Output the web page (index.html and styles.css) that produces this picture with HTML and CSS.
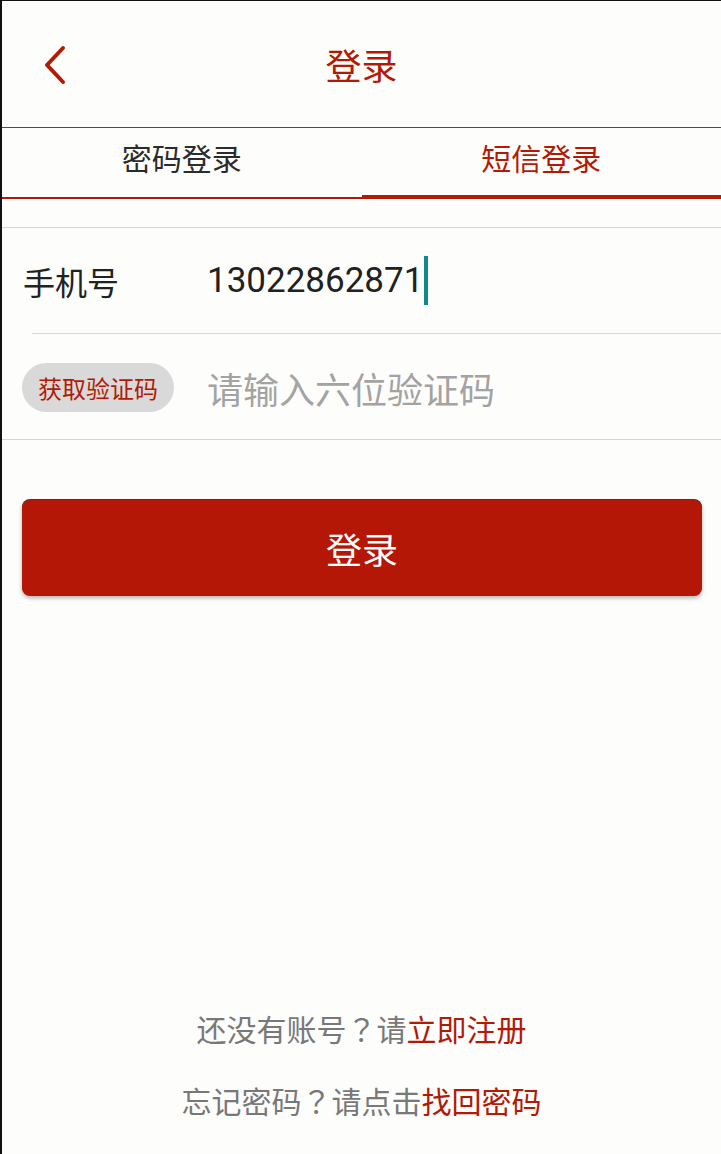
FILE: index.html
```html
<!DOCTYPE html>
<html lang="zh-CN">
<head>
<meta charset="utf-8">
<title>登录</title>
<link rel="stylesheet" href="styles.css">
</head>
<body>
  <div class="screen">
    <div class="topbar">
      <a class="back" href="#">
        <svg width="24" height="40" viewBox="0 0 24 40">
          <polyline points="19,3 3,20 19,37" fill="none" stroke="#b31a06" stroke-width="4" stroke-linecap="round" stroke-linejoin="round"/>
        </svg>
      </a>
      <div class="title">登录</div>
    </div>

    <div class="tabs">
      <div class="tab">密码登录</div>
      <div class="tab active">短信登录</div>
    </div>

    <div class="form">
      <div class="row">
        <div class="label">手机号</div>
        <div class="value">13022862871<span class="caret"></span></div>
      </div>
      <div class="row">
        <div class="label"><span class="getcode">获取验证码</span></div>
        <div class="value hint">请输入六位验证码</div>
      </div>
    </div>

    <a class="submit" href="#">登录</a>

    <div class="footer">
      <div class="line">还没有账号<span class="q" lang="ja">？</span>请<a href="#">立即注册</a></div>
      <div class="line">忘记密码<span class="q" lang="ja">？</span>请点击<a href="#">找回密码</a></div>
    </div>
  </div>
</body>
</html>
```

FILE: styles.css
```css
body { margin:0; background:#fdfdfc; font-family:Roboto,"Noto Sans CJK SC",sans-serif; }
a { text-decoration:none; color:#b31a06; }

.screen { width:721px; height:1154px; box-sizing:border-box;
          border-left:2px solid #111; border-top:1px solid #111;
          display:flex; flex-direction:column; }

.topbar { height:126px; border-bottom:1px solid #c0200a; position:relative;
          display:flex; align-items:center; justify-content:center; }
.back  { position:absolute; left:42px; top:44px; line-height:0; }
.title { color:#b31a06; font-size:36px; }

.tabs { display:flex; height:71px; }
.tab  { flex:1; display:flex; align-items:center; justify-content:center;
        font-size:30px; color:#2b2b2b; border-bottom:2px solid #b31a06; padding-bottom:11px; }
.tab.active { color:#b31a06; border-bottom-width:4px; padding-bottom:9px; }

.form { margin-top:28px; border-top:1px solid #d6d6d6; border-bottom:1px solid #d6d6d6; }
.row  { height:105px; display:flex; align-items:center; padding-left:21px; }
.row + .row { border-top:1px solid #d6d6d6; margin-left:30px; padding-left:0; }
.row + .row .label { margin-left:-10px; width:185px; }
.label { width:184px; font-size:32px; color:#222; padding-top:1px; }
.value { font-size:35px; color:#212121; display:flex; align-items:center; }
.hint  { font-size:36px; color:#a3a3a3; padding-top:2px; }
.caret { display:inline-block; width:4px; height:49px; background:#0e8a88; margin-left:1px; }
.getcode { display:inline-flex; align-items:center; justify-content:center;
           width:152px; height:49px; border-radius:25px; background:#d9d9d9;
           color:#b31a06; font-size:24px; }

.submit { margin:60px 19px 0 20px; height:96px; border-radius:8px; background:#b41705;
          color:#fff; font-size:36px; display:flex; align-items:center; justify-content:center;
          box-shadow:0 -1px 0 #3a3a3a, 0 2px 4px rgba(0,0,0,.3); }

.footer { margin-top:auto; padding-bottom:18px; }
.footer .line { height:72px; line-height:72px; text-align:center; font-size:30px; color:#787878; }
.q { font-family:"Noto Sans CJK JP",sans-serif; }
```
